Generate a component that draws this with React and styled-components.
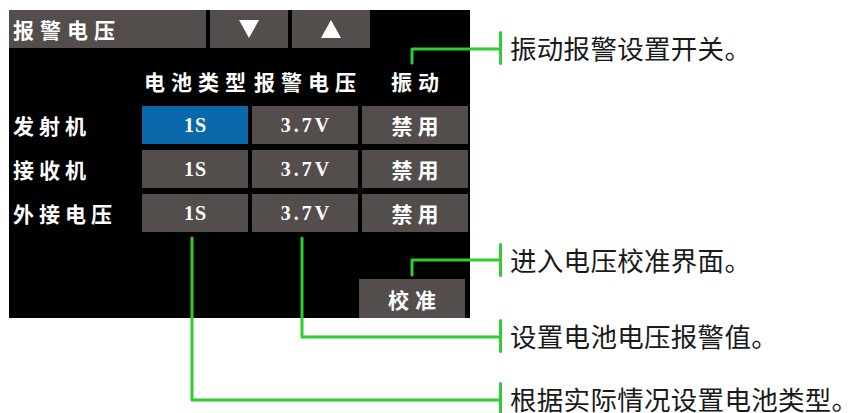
import React from "react";
import styled, { createGlobalStyle } from "styled-components";

const GREY = "#534e4b";
const BLUE = "#0a68ab";
const GREEN = "#31cc31";

const GlobalStyle = createGlobalStyle`
  html, body {
    margin: 0;
    padding: 0;
    background: #ffffff;
  }
  body {
    font-family: "Noto Sans CJK SC", sans-serif;
  }
`;

const Page = styled.div`
  position: relative;
  width: 861px;
  height: 413px;
  display: flex;
  align-items: flex-start;
  overflow: hidden;
`;

const Screen = styled.div`
  margin: 10px 0 0 9px;
  width: 461px;
  height: 308px;
  flex-shrink: 0;
  background: #000;
  display: flex;
  flex-direction: column;
  color: #fff;
  font-family: "Liberation Serif", "Noto Sans CJK SC", serif;
  font-weight: 700;
`;

const TopBar = styled.div`
  display: flex;
  gap: 4px;
  height: 38px;
`;

const TitleCell = styled.div`
  width: 193px;
  padding-left: 4px;
  background: ${GREY};
  display: flex;
  align-items: center;
  font-size: 21px;
  letter-spacing: 6px;
  white-space: nowrap;
`;

const ArrowButton = styled.div`
  width: 78px;
  background: ${GREY};
  display: flex;
  align-items: center;
  justify-content: center;
`;

const Table = styled.div`
  display: grid;
  grid-template-columns: 129px repeat(3, 106px);
  grid-template-rows: 52px repeat(3, 38px);
  column-gap: 4px;
  row-gap: 6px;
`;

const HeadCell = styled.div`
  display: flex;
  justify-content: center;
  align-items: flex-end;
  padding-left: 6px;
  line-height: 34px;
  font-size: 21px;
  letter-spacing: 6px;
  white-space: nowrap;
`;

const RowLabel = styled.div`
  padding-left: 4px;
  display: flex;
  align-items: center;
  font-size: 21px;
  letter-spacing: 5px;
  white-space: nowrap;
`;

const ValueCell = styled.div`
  background: ${(p) => (p.$active ? BLUE : GREY)};
  display: flex;
  align-items: center;
  justify-content: center;
  padding-left: ${(p) => p.$spacing || 0}px;
  font-size: ${(p) => (p.$cjk ? "21px" : "20px")};
  letter-spacing: ${(p) => p.$spacing || 0}px;
  white-space: nowrap;
`;

const Footer = styled.div`
  margin-top: auto;
  display: flex;
  justify-content: flex-end;
  padding-right: 5px;
`;

const CalButton = styled.div`
  width: 100px;
  height: 39px;
  padding-left: 6px;
  background: ${GREY};
  display: flex;
  align-items: center;
  justify-content: center;
  font-size: 21px;
  letter-spacing: 6px;
`;

const Notes = styled.div`
  margin-left: 29px;
  display: flex;
  flex-direction: column;
`;

const Note = styled.div`
  margin-top: ${(p) => p.$top}px;
  height: 34px;
  display: flex;
  align-items: center;
  gap: 8px;
`;

const Marker = styled.span`
  width: 3px;
  height: 34px;
  border-radius: 2px;
  background: ${GREEN};
  flex-shrink: 0;
`;

const NoteText = styled.span`
  font-family: "Noto Sans CJK SC", sans-serif;
  font-size: 26.5px;
  letter-spacing: 0.3px;
  color: #1a1a1a;
  white-space: nowrap;
  line-height: 28px;
`;

const Connectors = styled.svg`
  position: absolute;
  left: 0;
  top: 0;
  pointer-events: none;
`;

const rows = [
  { label: "发射机", active: true },
  { label: "接收机", active: false },
  { label: "外接电压", active: false },
];

const notes = [
  { top: 31, text: "振动报警设置开关。" },
  { top: 178, text: "进入电压校准界面。" },
  { top: 42, text: "设置电池电压报警值。" },
  { top: 29, text: "根据实际情况设置电池类型。" },
];

const lines = [
  "M412 63 V49 H500",
  "M412 275 V260 H500",
  "M302 238 V337 H500",
  "M192 238 V400 H500",
];

const Triangle = ({ up }) => (
  <svg width="20" height="18" viewBox="0 0 20 18">
    <polygon points={up ? "10,0 20,18 0,18" : "0,0 20,0 10,18"} fill="#fff" />
  </svg>
);

export default function App() {
  return (
    <Page>
      <GlobalStyle />
      <Screen>
        <TopBar>
          <TitleCell>报警电压</TitleCell>
          <ArrowButton>
            <Triangle />
          </ArrowButton>
          <ArrowButton>
            <Triangle up />
          </ArrowButton>
        </TopBar>
        <Table>
          <div />
          <HeadCell>电池类型</HeadCell>
          <HeadCell>报警电压</HeadCell>
          <HeadCell>振动</HeadCell>
          {rows.map((r) => (
            <React.Fragment key={r.label}>
              <RowLabel>{r.label}</RowLabel>
              <ValueCell $active={r.active} $spacing={1}>1S</ValueCell>
              <ValueCell $spacing={3}>3.7V</ValueCell>
              <ValueCell $cjk $spacing={5}>禁用</ValueCell>
            </React.Fragment>
          ))}
        </Table>
        <Footer>
          <CalButton>校准</CalButton>
        </Footer>
      </Screen>
      <Notes>
        {notes.map((n) => (
          <Note key={n.text} $top={n.top}>
            <Marker />
            <NoteText>{n.text}</NoteText>
          </Note>
        ))}
      </Notes>
      <Connectors width="861" height="413" viewBox="0 0 861 413">
        {lines.map((d) => (
          <path
            key={d}
            d={d}
            fill="none"
            stroke={GREEN}
            strokeWidth="3"
            strokeLinecap="round"
            strokeLinejoin="round"
          />
        ))}
      </Connectors>
    </Page>
  );
}
